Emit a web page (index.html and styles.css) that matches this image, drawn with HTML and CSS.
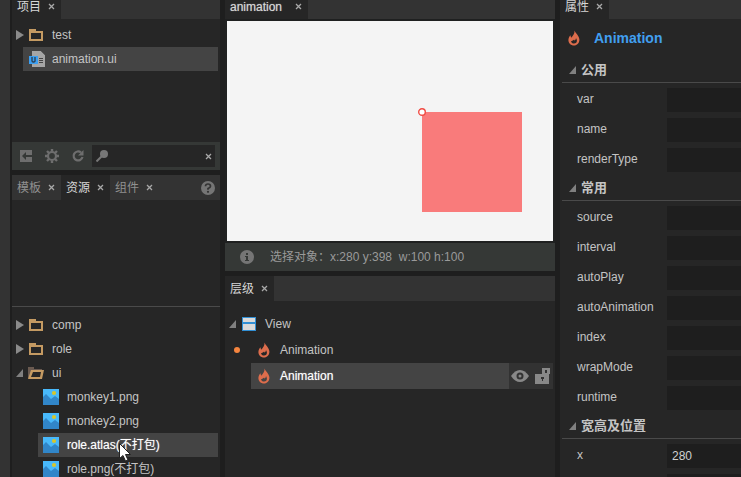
FILE: index.html
```html
<!DOCTYPE html>
<html lang="zh-CN">
<head>
<meta charset="utf-8">
<title>animation.ui</title>
<link rel="stylesheet" href="styles.css">
</head>
<body>
<svg class="defs" aria-hidden="true">
  <symbol id="close" viewBox="0 0 7 7"><path d="M1 1l5 5M6 1L1 6" stroke="#a8a8a8" stroke-width="1.3" fill="none"/></symbol>
  <symbol id="folder" viewBox="0 0 16 16"><path fill="#c49a62" fill-rule="evenodd" d="M1 2h7v2h7v10H1zM3 6v6h10V6z"/></symbol>
  <symbol id="folder-open" viewBox="0 0 16 16"><path fill="#6a5a50" d="M0 2h6v2h8v2H4L1 13H0z"/><path fill="#c49a62" fill-rule="evenodd" d="M3 5h13l-2 9H0zM5 7l-2 5h9l1-5z"/></symbol>
  <symbol id="picture" viewBox="0 0 16 16"><path fill="#48b9fb" d="M0 0h16v16H0z"/><path fill="#3186c9" d="M0 8l3-3 5 5 4-3 4 3v6H0z"/><circle cx="11" cy="4" r="2.1" fill="#d6c62c"/></symbol>
  <symbol id="flame" viewBox="0 0 16 16"><path fill="#dd6d4c" fill-rule="evenodd" d="M8.5 0.5c.4 2.2 4.700 5 4.900 9 .1 3.500-2.400 6-5.400 6s-5.600-2.200-5.600-5.500c0-2 .9-3.500 2-4.800l.7 2.500C7 6 8.800 3.500 8.500.500zM5 11.200c.4 1.500 1.500 2.400 3 2.400 1.800 0 3.200-1.300 2.900-3.300-.2-1-.7-1.600-.9-2.300-.1 1.500-.8 2.400-1.700 2.600-.2-.4-.2-.8-.1-1.200-.9.700-1.900 1.700-3.200 1.800z"/></symbol>
  <symbol id="down" viewBox="0 0 8 8"><path fill="#808080" d="M7 0v8H0z"/></symbol>
  <symbol id="right" viewBox="0 0 8 10"><path fill="#8a8a8a" d="M0 0l8 5-8 5z"/></symbol>
</svg>
<div class="app">
  <div class="column">
    <section class="panel project">
      <nav class="tabs">
        <div class="tab active"><span>项目</span><button class="close" aria-label="关闭项目"><svg><use href="#close"/></svg></button></div>
      </nav>
      <ul class="tree grow">
        <li class="row"><svg class="arrow"><use href="#right"/></svg><svg class="icon"><use href="#folder"/></svg><span>test</span></li>
        <li class="row file selected"><svg class="icon" viewBox="0 0 16 16"><path fill="#a5a5a5" d="M3 0h9l4 4v12H3z"/><path fill="#454545" d="M12 0h4v4zM10 7h4v1h-4zM10 9h4v1h-4zM10 11h4v1h-4z"/><path fill="#3b9ff2" d="M0 5h9v8H0z"/><path d="M3 6v4q0 1 1.500 1T6 10V6" fill="none" stroke="#2c3c4c" stroke-width="1.300"/></svg><span>animation.ui</span></li>
      </ul>
      <div class="toolbar">
        <button class="tool" aria-label="导入"><svg viewBox="0 0 14 14"><path fill="#6e6e6e" fill-rule="evenodd" d="M1 1h12v12H1zM3 7l4 4V8h6V6H7V3z"/></svg></button>
        <button class="tool" aria-label="设置"><svg viewBox="0 0 14 14"><g stroke="#6e6e6e" fill="none"><circle cx="7" cy="7" r="4" stroke-width="2.200"/><path stroke-width="2.400" d="M7 0v2.500M7 11.500V14M0 7h2.500M11.500 7H14M2 2l2 2M10 10l2 2M12 2l-2 2M4 10l-2 2"/></g></svg></button>
        <button class="tool" aria-label="刷新"><svg viewBox="0 0 14 14"><path d="M10 3.500A4.500 4.500 0 1 0 11.500 8" fill="none" stroke="#6e6e6e" stroke-width="2.200"/><path fill="#6e6e6e" d="M12.500 1v5.500H7z"/></svg></button>
        <div class="search">
          <svg class="lens" viewBox="0 0 12 12"><circle cx="8" cy="4" r="4" fill="#777"/><path d="M6 6l-5.500 5.500" stroke="#777" stroke-width="2"/></svg>
          <input type="text" aria-label="搜索">
          <button class="close" aria-label="清除"><svg><use href="#close"/></svg></button>
        </div>
      </div>
    </section>

    <section class="panel grow">
      <nav class="tabs">
        <div class="tab"><span>模板</span><button class="close" aria-label="关闭模板"><svg><use href="#close"/></svg></button></div>
        <div class="tab active"><span>资源</span><button class="close" aria-label="关闭资源"><svg><use href="#close"/></svg></button></div>
        <div class="tab"><span>组件</span><button class="close" aria-label="关闭组件"><svg><use href="#close"/></svg></button></div>
        <button class="help" aria-label="帮助"><svg viewBox="0 0 14 14"><circle cx="7" cy="7" r="7" fill="#757575"/><path d="M4.500 5.300Q4.500 3 7 3T9.500 5.200Q9.500 6.500 7 7.500V8.800" fill="none" stroke="#333" stroke-width="1.700"/><circle cx="7" cy="10.800" r="1.100" fill="#333"/></svg></button>
      </nav>
      <div class="preview"></div>
      <ul class="tree assets">
        <li class="row"><svg class="arrow"><use href="#right"/></svg><svg class="icon"><use href="#folder"/></svg><span>comp</span></li>
        <li class="row"><svg class="arrow"><use href="#right"/></svg><svg class="icon"><use href="#folder"/></svg><span>role</span></li>
        <li class="row"><svg class="arrow"><use href="#down"/></svg><svg class="icon"><use href="#folder-open"/></svg><span>ui</span></li>
        <li class="row child"><svg class="icon"><use href="#picture"/></svg><span>monkey1.png</span></li>
        <li class="row child"><svg class="icon"><use href="#picture"/></svg><span>monkey2.png</span></li>
        <li class="row child selected strong"><svg class="icon"><use href="#picture"/></svg><span>role.atlas(不打包)</span><svg class="cursor" viewBox="0 0 12 19"><path d="M.5.500v15l3.500-3 2.500 5.500 2.500-1-2.500-5.500h5z" fill="#fff" stroke="#222" stroke-width="1"/></svg></li>
        <li class="row child"><svg class="icon"><use href="#picture"/></svg><span>role.png(不打包)</span></li>
      </ul>
    </section>
  </div>

  <div class="column">
    <section class="panel">
      <nav class="tabs">
        <div class="tab active wide"><span>animation</span><button class="close" aria-label="关闭 animation"><svg><use href="#close"/></svg></button></div>
      </nav>
      <div class="stage"><div class="shape"><svg class="pivot" viewBox="0 0 8 8"><circle cx="4" cy="4" r="3.300" fill="#fff" stroke="#f04a42" stroke-width="1.400"/></svg></div></div>
      <div class="status">
        <svg class="info" viewBox="0 0 14 14"><circle cx="7" cy="7" r="7" fill="#757575"/><path d="M6 3h2v2H6zM5 6h3v4h1v1H5v-1h1V7H5z" fill="#353836"/></svg>
        <span>选择对象：x:280 y:398&nbsp; w:100 h:100</span>
      </div>
    </section>

    <section class="panel grow">
      <nav class="tabs">
        <div class="tab active"><span>层级</span><button class="close" aria-label="关闭层级"><svg><use href="#close"/></svg></button></div>
      </nav>
      <ul class="tree layers">
        <li class="row"><svg class="arrow"><use href="#down"/></svg><svg class="view-icon" viewBox="0 0 14 14"><path fill="#318fd4" d="M0 0h14v14H0z"/><path fill="#d9d9d9" d="M1 1h12v4H1zM1 7h12v6H1z"/></svg><span>View</span></li>
        <li class="row"><i class="dot"></i><div class="node"><svg class="flame"><use href="#flame"/></svg><span>Animation</span></div></li>
        <li class="row strong"><i class="dot off"></i><div class="node selected"><svg class="flame"><use href="#flame"/></svg><span>Animation</span></div>
          <div class="node-tools">
            <button aria-label="显示"><svg class="eye" viewBox="0 0 18 12"><path fill="#888" d="M0 6Q4 0 9 0t9 6q-4 6-9 6T0 6z"/><circle cx="9" cy="6" r="2.500" fill="#888" stroke="#333" stroke-width="2"/></svg></button>
            <button aria-label="锁定"><svg class="lock" viewBox="0 0 17 16"><path fill="#888" fill-rule="evenodd" d="M1 6h7V0h8v6h-1v10H1zM11 2v3h2V2zM7 9v2h1v2h1v-2h1V9z"/></svg></button>
          </div></li>
      </ul>
    </section>
  </div>

  <div class="column">
    <section class="panel grow">
      <nav class="tabs">
        <div class="tab active"><span>属性</span><button class="close" aria-label="关闭属性"><svg><use href="#close"/></svg></button></div>
      </nav>
      <h1 class="title"><svg class="flame"><use href="#flame"/></svg>Animation</h1>
      <h2 class="group"><svg class="arrow"><use href="#down"/></svg>公用</h2>
      <div class="fields">
        <label for="var">var</label><input id="var" type="text">
        <label for="name">name</label><input id="name" type="text">
        <label for="renderType">renderType</label><input id="renderType" type="text">
      </div>
      <h2 class="group"><svg class="arrow"><use href="#down"/></svg>常用</h2>
      <div class="fields">
        <label for="source">source</label><input id="source" type="text">
        <label for="interval">interval</label><input id="interval" type="text">
        <label for="autoPlay">autoPlay</label><input id="autoPlay" type="text">
        <label for="autoAnimation">autoAnimation</label><input id="autoAnimation" type="text">
        <label for="index">index</label><input id="index" type="text">
        <label for="wrapMode">wrapMode</label><input id="wrapMode" type="text">
        <label for="runtime">runtime</label><input id="runtime" type="text">
      </div>
      <h2 class="group"><svg class="arrow"><use href="#down"/></svg>宽高及位置</h2>
      <div class="fields">
        <label for="x">x</label><input id="x" type="text" value="280">
        <input class="unlabelled" type="text" aria-label="y">
      </div>
    </section>
  </div>
</div>
</body>
</html>
```

FILE: styles.css
```css
* { box-sizing: border-box; }

body {
  margin: 0;
  height: 100vh;
  overflow: hidden;
  background: #1e1e1e;
  color: #c4c4c4;
  font: 12px/16px "Liberation Sans", "Noto Sans CJK SC", sans-serif;
}

button {
  display: flex;
  padding: 0;
  border: 0;
  background: none;
}

ul { margin: 0; padding: 0; list-style: none; }
svg { flex: none; display: block; }
.defs { position: absolute; width: 0; height: 0; }

/* The workspace starts a little above the window edge. */
.app {
  display: grid;
  grid-template-columns: 208px minmax(0, 1fr) 181px;
  column-gap: 5px;
  height: calc(100vh + 6px);
  margin-top: -6px;
  padding-left: 2px;
  border-left: 10px solid #333;
}

.column {
  display: flex;
  flex-direction: column;
  gap: 5px;
  min-width: 0;
  min-height: 0;
}

.panel {
  display: flex;
  flex-direction: column;
  min-height: 0;
  overflow: hidden;
  background: #262626;
}
.project { height: 176px; flex: none; }
.grow { flex: 1; }

/* Tabs */
.tabs {
  display: flex;
  flex: none;
  height: 25px;
  background: #333;
}
.tab {
  display: flex;
  align-items: center;
  gap: 7px;
  padding: 0 6px 0 5px;
  color: #909090;
}
.tab.active { background: #262626; color: #d6d6d6; }
.tab.wide { gap: 13px; text-shadow: 0 0 1px #999; }
.close svg { width: 7px; height: 7px; }
.help { align-self: center; margin: 0 5px 0 auto; }
.help svg, .info { width: 14px; height: 14px; }

/* Trees */
.tree { padding: 4px 2px 0 0; }
.row {
  display: flex;
  align-items: center;
  height: 24px;
  padding-left: 4px;
  white-space: nowrap;
}
.arrow { width: 8px; height: 10px; }
.icon { width: 16px; height: 16px; }
.row .icon { margin: 0 8px 0 4px; }
.file { margin-left: 11px; padding-left: 2px; }
.file .icon { margin-right: 7px; }
.child { margin-left: 26px; padding-left: 1px; }
.selected { background: #444; }
.strong { color: #fff; text-shadow: 0 0 1px #aaa; }
.preview { height: 106px; flex: none; }
.assets { border-top: 1px solid #4a4a4a; padding: 6px 0 0; }
.assets .selected { position: relative; margin-right: 2px; }
.cursor { position: absolute; left: 81px; top: 10px; width: 12px; height: 19px; }

/* Project toolbar */
.toolbar {
  display: flex;
  align-items: center;
  gap: 12px;
  height: 28px;
  padding: 0 5px 0 7px;
  background: #353836;
}
.tool svg { width: 14px; height: 14px; }
.search {
  display: flex;
  flex: 1;
  align-items: center;
  min-width: 0;
  height: 22px;
  margin-left: -5px;
  padding: 0 3px 0 4px;
  background: #262626;
}
.lens { width: 12px; height: 12px; }
input {
  width: 100%;
  min-width: 0;
  border: 0;
  outline: 0;
  background: #1e1e1e;
  color: #d0d0d0;
  font: inherit;
}
.search input { background: none; }

/* Stage */
.stage {
  position: relative;
  height: 224px;
  border: 2px solid #1f2020;
  background: #f4f4f4;
}
.shape {
  position: absolute;
  left: 195px;
  top: 91px;
  width: 100px;
  height: 100px;
  background: #f97b7b;
}
.pivot {
  position: absolute;
  left: -4px;
  top: -4px;
  width: 8px;
  height: 8px;
}
.status {
  display: flex;
  align-items: center;
  gap: 16px;
  height: 28px;
  padding-left: 15px;
  background: #353836;
  color: #9a9a9a;
}

/* Layers */
.layers { padding-top: 10px; }
.layers .row { height: 26px; }
.view-icon { width: 14px; height: 14px; margin: 0 9px 0 5px; }
.flame { width: 16px; height: 16px; }
.dot {
  flex: none;
  width: 6px;
  height: 6px;
  margin: 0 11px 0 5px;
  border-radius: 50%;
  background: #f5853f;
}
.dot.off { visibility: hidden; }
.node {
  display: flex;
  flex: 1;
  align-items: center;
  gap: 8px;
  height: 26px;
  padding-left: 5px;
}
.node-tools {
  display: flex;
  align-items: center;
  gap: 5px;
  height: 26px;
  padding: 0 2px;
  background: #323232;
}
.eye { width: 18px; height: 12px; }
.lock { width: 17px; height: 16px; }

/* Properties */
.title {
  display: flex;
  flex: none;
  align-items: center;
  gap: 12px;
  height: 38px;
  margin: 0;
  padding-left: 6px;
  color: #419ff0;
  font-size: 14px;
}
.group {
  display: flex;
  flex: none;
  align-items: center;
  gap: 4px;
  height: 26px;
  margin: 0 0 2px 2px;
  padding-left: 7px;
  border-bottom: 1px solid #4a4a4a;
  font-size: 13px;
}
.group .arrow, .layers .arrow { height: 8px; }
.fields {
  display: grid;
  flex: none;
  grid-template-columns: 90px minmax(0, 1fr);
  grid-auto-rows: 30px;
  align-items: center;
  padding-left: 17px;
}
.fields label { padding-bottom: 3px; }
.fields input { height: 24px; padding: 0 5px; }
.fields .unlabelled { grid-column: 2; }
```
